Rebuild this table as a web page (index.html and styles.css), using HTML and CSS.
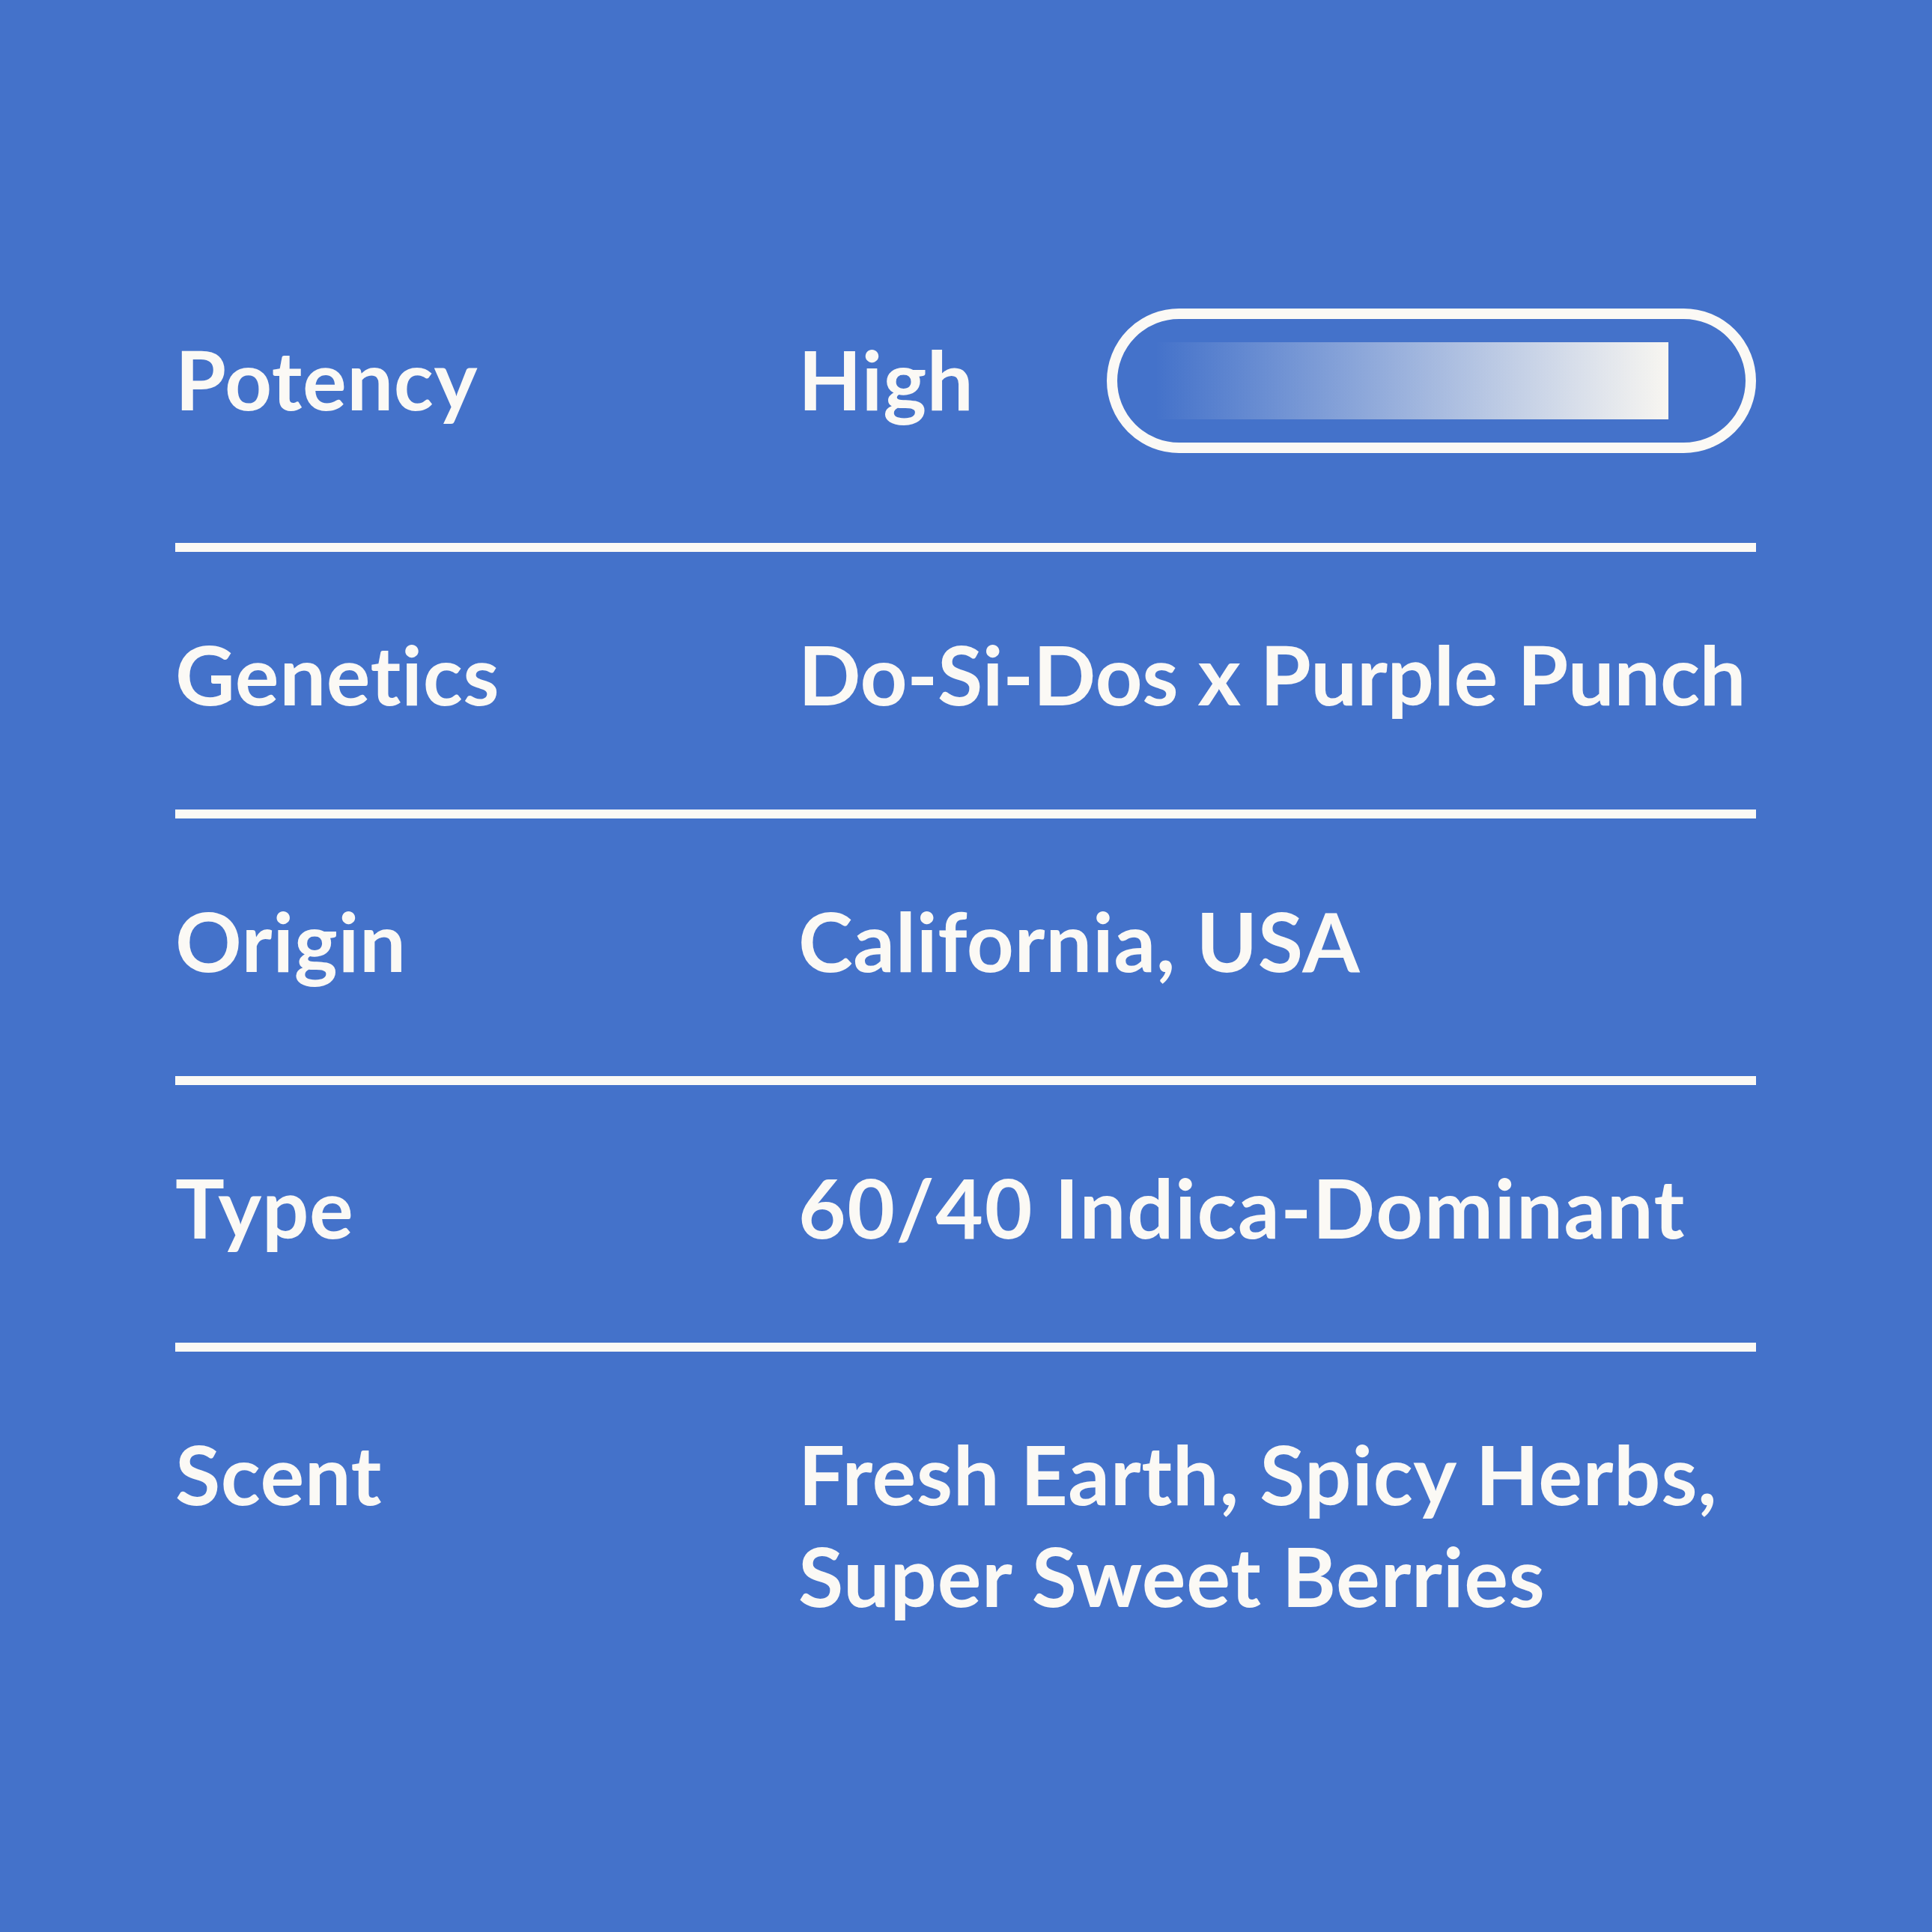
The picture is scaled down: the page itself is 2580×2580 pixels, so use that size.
FILE: index.html
```html
<!DOCTYPE html>
<html lang="en">
<head>
<meta charset="utf-8">
<title>Strain details</title>
<link rel="stylesheet" href="styles.css">
</head>
<body>
<main class="sheet">
  <section class="row row--potency">
    <div class="label">Potency</div>
    <div class="value value--potency">
      <span class="value__text">High</span>
      <div class="pill"><div class="pill__fill"></div></div>
    </div>
  </section>
  <div class="rule"></div>
  <section class="row row--text">
    <div class="label">Genetics</div>
    <div class="value value--tight">Do-Si-Dos x Purple Punch</div>
  </section>
  <div class="rule"></div>
  <section class="row row--text">
    <div class="label">Origin</div>
    <div class="value">California, USA</div>
  </section>
  <div class="rule"></div>
  <section class="row row--text">
    <div class="label">Type</div>
    <div class="value value--loose">60/40 Indica-Dominant</div>
  </section>
  <div class="rule"></div>
  <section class="row row--text">
    <div class="label">Scent</div>
    <div class="value">Fresh Earth, Spicy Herbs,<br>Super Sweet Berries</div>
  </section>
</main>
</body>
</html>
```
FILE: styles.css
```css
html, body {
  margin: 0;
  padding: 0;
  background: #4472ca;
}

.sheet {
  box-sizing: border-box;
  width: 2580px;
  height: 2580px;
  padding: 412px 235px 0 234px;
  background: #4472ca;
  color: #fbf9f5;
  font-family: "Lato", "Noto Sans", sans-serif;
  font-weight: 700;
  font-size: 110px;
  line-height: 136px;
  letter-spacing: 0.6px;
  font-variant-ligatures: none;
}

.row {
  display: grid;
  grid-template-columns: 832px 1fr;
  align-items: center;
}

.row--potency {
  padding-bottom: 120px;
}

.row--potency .label,
.row--potency .value__text {
  margin-bottom: 8px;
}

.row--text {
  align-items: start;
  padding: 94px 0 114px;
}

.value {
  white-space: nowrap;
}

.value--tight {
  letter-spacing: -0.4px;
}

.value--loose {
  letter-spacing: 1.5px;
}

.value--potency {
  display: flex;
  align-items: center;
  justify-content: space-between;
}

.pill {
  box-sizing: border-box;
  width: 867px;
  height: 193px;
  border: 14px solid #fbf9f5;
  border-radius: 97px;
  display: flex;
  align-items: center;
  padding-left: 51px;
}

.pill__fill {
  width: 685px;
  height: 103px;
  background: linear-gradient(90deg, rgba(248, 246, 241, 0) 0%, #f8f6f1 100%);
}

.rule {
  height: 12px;
  background: #fbf9f5;
}
```
